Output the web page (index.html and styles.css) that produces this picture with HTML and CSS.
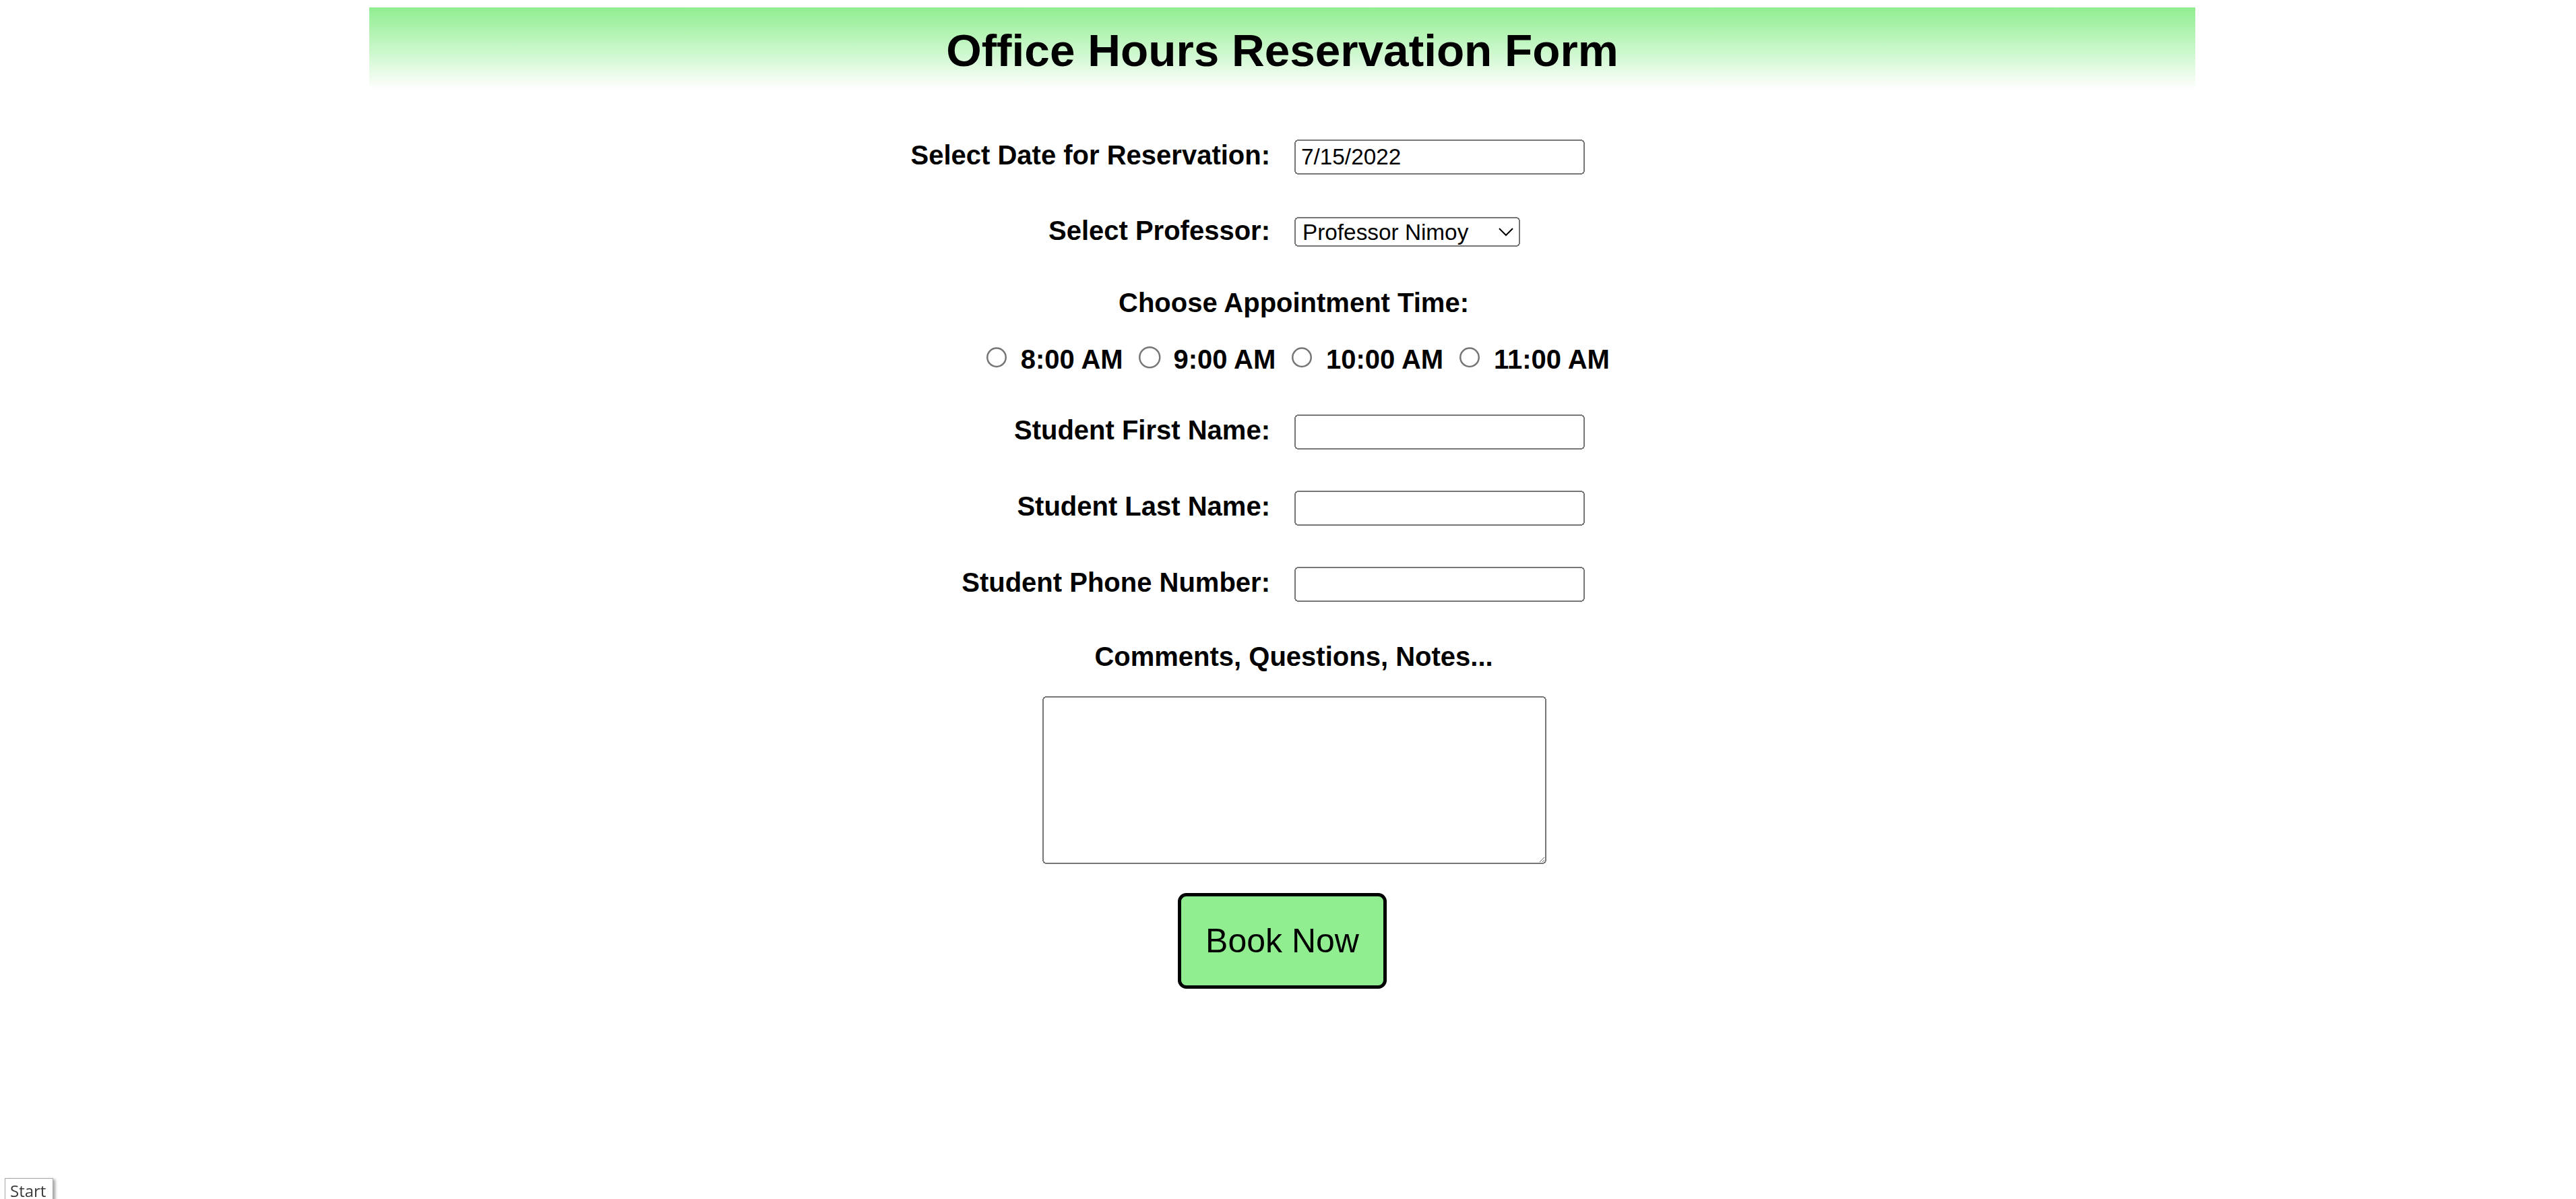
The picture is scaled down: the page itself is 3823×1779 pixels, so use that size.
FILE: index.html
```html
<!DOCTYPE html>
<html lang="en">
<head>
<meta charset="utf-8">
<title>Office Hours Reservation Form</title>
<link rel="stylesheet" href="styles.css">
</head>
<body>
<div class="page">
  <header class="banner">
    <h1 class="banner-title">Office Hours Reservation Form</h1>
  </header>
  <form class="form">
    <div class="row row-first">
      <label class="lbl" for="date">Select Date for Reservation:</label>
      <div class="field"><input class="txt" id="date" type="text" value="7/15/2022"></div>
    </div>
    <div class="row">
      <label class="lbl" for="prof">Select Professor:</label>
      <div class="field">
        <select class="sel" id="prof">
          <option selected>Professor Nimoy</option>
          <option>Professor Shatner</option>
          <option>Professor Takei</option>
        </select>
      </div>
    </div>
    <div class="heading heading-time">Choose Appointment Time:</div>
    <div class="radios">
      <input type="radio" name="time" id="t8"> <label for="t8">8:00 AM</label>
      <input type="radio" name="time" id="t9"> <label for="t9">9:00 AM</label>
      <input type="radio" name="time" id="t10"> <label for="t10">10:00 AM</label>
      <input type="radio" name="time" id="t11"> <label for="t11">11:00 AM</label>
    </div>
    <div class="row row-after-radios">
      <label class="lbl" for="fn">Student First Name:</label>
      <div class="field"><input class="txt" id="fn" type="text"></div>
    </div>
    <div class="row">
      <label class="lbl" for="ln">Student Last Name:</label>
      <div class="field"><input class="txt" id="ln" type="text"></div>
    </div>
    <div class="row">
      <label class="lbl" for="ph">Student Phone Number:</label>
      <div class="field"><input class="txt" id="ph" type="text"></div>
    </div>
    <div class="heading heading-notes">Comments, Questions, Notes...</div>
    <textarea class="notes"></textarea>
    <button class="book" type="button">Book Now</button>
  </form>
</div>
<div class="start">Start</div>
</body>
</html>
```
FILE: styles.css
```css
html, body {
  margin: 0;
  padding: 0;
  background: #ffffff;
  overflow: hidden;
}

.page {
  zoom: 2.5;
  padding-top: 4.4px;
  font-family: "Liberation Sans", Arial, sans-serif;
  color: #000;
}

.banner {
  margin-left: 219.2px;
  width: 1084px;
  height: 48.8px;
  box-sizing: border-box;
  padding-top: 2px;
  background: linear-gradient(to bottom, #90ee90, #ffffff);
}

.banner-title {
  margin: 0;
  font-size: 27px;
  font-weight: bold;
  line-height: 46.8px;
  text-align: center;
}

.form {
  margin: 0 0 0 219.2px;
  width: 1084px;
  display: flex;
  flex-direction: column;
}

.row {
  display: flex;
  align-items: baseline;
  column-gap: 14.4px;
  margin-top: 24.4px;
}

.row-first {
  margin-top: 29.4px;
}

.row-after-radios {
  margin-top: 23.95px;
}

.lbl {
  flex: 1 1 0;
  text-align: right;
  font-size: 16px;
  font-weight: bold;
  line-height: normal;
}

.field {
  flex: 1 1 0;
}

.txt {
  box-sizing: border-box;
  width: 172.4px;
  height: 20.8px;
  margin: 0;
  padding: 1px 2px;
  font-family: "Liberation Sans", Arial, sans-serif;
  font-size: 13.333px;
  color: #000;
}

.sel {
  box-sizing: border-box;
  width: 134px;
  height: 17.6px;
  margin: 0;
  font-family: "Liberation Sans", Arial, sans-serif;
  font-size: 13.333px;
  color: #000;
}

.heading {
  padding-left: 13.6px;
  text-align: center;
  font-size: 16px;
  font-weight: bold;
  line-height: normal;
}

.heading-time {
  margin-top: 24.45px;
}

.heading-notes {
  margin-top: 23.3px;
}

.radios {
  margin-top: 13.95px;
  padding-left: 13.6px;
  text-align: center;
  font-size: 16px;
  font-weight: bold;
  line-height: normal;
}

.notes {
  display: block;
  align-self: center;
  box-sizing: border-box;
  width: 299.2px;
  height: 99.6px;
  margin: 14.35px 0 0 14.4px;
  font-family: "Liberation Mono", monospace;
  font-size: 13.333px;
}

.book {
  align-self: center;
  box-sizing: border-box;
  width: 124px;
  height: 56.8px;
  margin-top: 17.2px;
  padding: 0;
  background: #90ee90;
  border: 2px solid #000;
  border-radius: 5px;
  font-family: "Liberation Sans", Arial, sans-serif;
  font-size: 20px;
  color: #000;
  cursor: pointer;
}

.start {
  position: fixed;
  left: 7px;
  top: 1748px;
  width: 72px;
  height: 40px;
  box-sizing: border-box;
  padding: 6px 0 0 7px;
  border: 1px solid #a8a8a8;
  background: #ffffff;
  box-shadow: 3px 2px 4px rgba(0, 0, 0, 0.35);
  font-family: "Open Sans", "Noto Sans", sans-serif;
  font-size: 24px;
  line-height: 24px;
  color: #3a3a3a;
}
```
